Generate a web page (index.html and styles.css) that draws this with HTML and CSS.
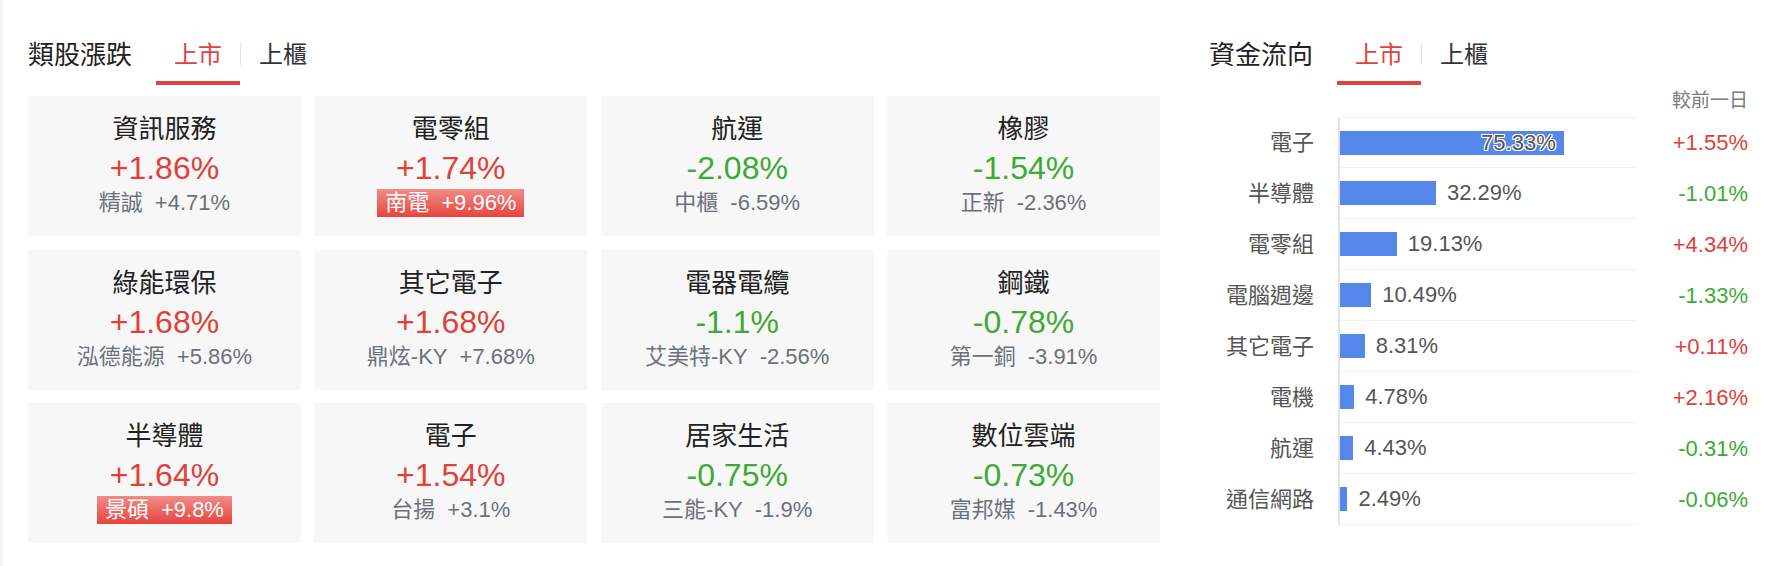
FILE: index.html
```html
<!DOCTYPE html>
<html lang="zh-Hant">
  <head>
    <meta charset="UTF-8" />
    <meta name="viewport" content="width=device-width, initial-scale=1.0" />
    <title>類股漲跌</title>
    <link rel="stylesheet" href="styles.css">
  </head>
  <body>
    <div class="page">
      <section class="sectors">
        <div class="section-head">
          <h2 class="section-title">類股漲跌</h2>
          <div class="tabs">
            <span class="tab active">上市</span>
            <span class="tab-sep"></span>
            <span class="tab">上櫃</span>
          </div>
        </div>
        <div class="sector-grid">
          <div class="sector-card">
            <div class="sector-name">資訊服務</div>
            <div class="sector-change up">+1.86%</div>
            <div class="sector-top"><span>精誠</span><span class="pct">+4.71%</span></div>
          </div>
          <div class="sector-card">
            <div class="sector-name">電零組</div>
            <div class="sector-change up">+1.74%</div>
            <div class="sector-top limit"><span>南電</span><span class="pct">+9.96%</span></div>
          </div>
          <div class="sector-card">
            <div class="sector-name">航運</div>
            <div class="sector-change down">-2.08%</div>
            <div class="sector-top"><span>中櫃</span><span class="pct">-6.59%</span></div>
          </div>
          <div class="sector-card">
            <div class="sector-name">橡膠</div>
            <div class="sector-change down">-1.54%</div>
            <div class="sector-top"><span>正新</span><span class="pct">-2.36%</span></div>
          </div>

          <div class="sector-card">
            <div class="sector-name">綠能環保</div>
            <div class="sector-change up">+1.68%</div>
            <div class="sector-top"><span>泓德能源</span><span class="pct">+5.86%</span></div>
          </div>
          <div class="sector-card">
            <div class="sector-name">其它電子</div>
            <div class="sector-change up">+1.68%</div>
            <div class="sector-top"><span>鼎炫-KY</span><span class="pct">+7.68%</span></div>
          </div>
          <div class="sector-card">
            <div class="sector-name">電器電纜</div>
            <div class="sector-change down">-1.1%</div>
            <div class="sector-top"><span>艾美特-KY</span><span class="pct">-2.56%</span></div>
          </div>
          <div class="sector-card">
            <div class="sector-name">鋼鐵</div>
            <div class="sector-change down">-0.78%</div>
            <div class="sector-top"><span>第一銅</span><span class="pct">-3.91%</span></div>
          </div>

          <div class="sector-card">
            <div class="sector-name">半導體</div>
            <div class="sector-change up">+1.64%</div>
            <div class="sector-top limit"><span>景碩</span><span class="pct">+9.8%</span></div>
          </div>
          <div class="sector-card">
            <div class="sector-name">電子</div>
            <div class="sector-change up">+1.54%</div>
            <div class="sector-top"><span>台揚</span><span class="pct">+3.1%</span></div>
          </div>
          <div class="sector-card">
            <div class="sector-name">居家生活</div>
            <div class="sector-change down">-0.75%</div>
            <div class="sector-top"><span>三能-KY</span><span class="pct">-1.9%</span></div>
          </div>
          <div class="sector-card">
            <div class="sector-name">數位雲端</div>
            <div class="sector-change down">-0.73%</div>
            <div class="sector-top"><span>富邦媒</span><span class="pct">-1.43%</span></div>
          </div>
        </div>
      </section>

      <section class="flow">
        <div class="section-head">
          <h2 class="section-title">資金流向</h2>
          <div class="tabs">
            <span class="tab active">上市</span>
            <span class="tab-sep"></span>
            <span class="tab">上櫃</span>
          </div>
        </div>
        <div class="flow-note">較前一日</div>
        <div class="flow-chart">
          <div class="flow-row">
            <div class="flow-name">電子</div>
            <div class="flow-track">
              <div class="flow-bar" style="width: 75.33%"><span class="flow-val inside">75.33%</span></div>
            </div>
            <div class="flow-diff up">+1.55%</div>
          </div>
          <div class="flow-row">
            <div class="flow-name">半導體</div>
            <div class="flow-track">
              <div class="flow-bar" style="width: 32.29%"></div>
              <span class="flow-val">32.29%</span>
            </div>
            <div class="flow-diff down">-1.01%</div>
          </div>
          <div class="flow-row">
            <div class="flow-name">電零組</div>
            <div class="flow-track">
              <div class="flow-bar" style="width: 19.13%"></div>
              <span class="flow-val">19.13%</span>
            </div>
            <div class="flow-diff up">+4.34%</div>
          </div>
          <div class="flow-row">
            <div class="flow-name">電腦週邊</div>
            <div class="flow-track">
              <div class="flow-bar" style="width: 10.49%"></div>
              <span class="flow-val">10.49%</span>
            </div>
            <div class="flow-diff down">-1.33%</div>
          </div>
          <div class="flow-row">
            <div class="flow-name">其它電子</div>
            <div class="flow-track">
              <div class="flow-bar" style="width: 8.31%"></div>
              <span class="flow-val">8.31%</span>
            </div>
            <div class="flow-diff up">+0.11%</div>
          </div>
          <div class="flow-row">
            <div class="flow-name">電機</div>
            <div class="flow-track">
              <div class="flow-bar" style="width: 4.78%"></div>
              <span class="flow-val">4.78%</span>
            </div>
            <div class="flow-diff up">+2.16%</div>
          </div>
          <div class="flow-row">
            <div class="flow-name">航運</div>
            <div class="flow-track">
              <div class="flow-bar" style="width: 4.43%"></div>
              <span class="flow-val">4.43%</span>
            </div>
            <div class="flow-diff down">-0.31%</div>
          </div>
          <div class="flow-row">
            <div class="flow-name">通信網路</div>
            <div class="flow-track">
              <div class="flow-bar" style="width: 2.49%"></div>
              <span class="flow-val">2.49%</span>
            </div>
            <div class="flow-diff down">-0.06%</div>
          </div>
        </div>
      </section>
    </div>
  </body>
</html>
```

FILE: styles.css
```css
body {
  font-family: "Liberation Sans", "Noto Sans CJK TC", sans-serif;
  background-color: #fff;
  color: #222;
  margin: 0;
  padding: 0;
  min-height: 100vh;
  box-sizing: border-box;
  border-left: 3px solid #f3f3f3;
}

.page {
  display: flex;
  gap: 49px;
  padding: 0 20px 0 25px;
}

.sectors {
  width: 1132px;
  flex: none;
}

.flow {
  width: 539px;
  flex: none;
}

/* Heading with the market tabs */
.section-head {
  display: flex;
  align-items: flex-end;
  height: 85px;
}

.section-title {
  margin: 0 0 13px;
  font-size: 26px;
  line-height: 34px;
  font-weight: normal;
  color: #222;
}

.tabs {
  display: flex;
  align-items: flex-end;
  margin-left: 24px;
}

.tab {
  font-size: 24px;
  line-height: 34px;
  padding: 0 18px 9px;
  color: #333;
  border-bottom: 4px solid transparent;
}

.tab.active {
  color: #e0433d;
  border-bottom-color: #e0433d;
}

.tab-sep {
  width: 1px;
  height: 22px;
  margin-bottom: 20px;
  background-color: #e2e2e2;
}

.up {
  color: #e0403a;
}

.down {
  color: #3eaa33;
}

/* Sector cards */
.sector-grid {
  display: grid;
  grid-template-columns: repeat(4, 1fr);
  grid-auto-rows: 140px;
  gap: 13.5px;
  margin-top: 11px;
}

.sector-card {
  background-color: #f7f7f7;
  display: flex;
  flex-direction: column;
  align-items: center;
  padding-top: 16px;
  box-sizing: border-box;
}

.sector-name {
  font-size: 26px;
  line-height: 34px;
  color: #222;
}

.sector-change {
  font-size: 32px;
  line-height: 40px;
  margin-top: 2px;
}

.sector-top {
  font-size: 22px;
  line-height: 30px;
  color: #6b717a;
}

.sector-top .pct {
  margin-left: 12px;
}

.sector-top.limit {
  line-height: 28px;
  margin-top: 1px;
  padding: 0 8px;
  color: #fff;
  background: linear-gradient(#f08c88, #e8443e);
}

/* Money flow chart */
.flow-note {
  height: 32px;
  line-height: 32px;
  text-align: right;
  font-size: 19px;
  color: #7a7a7a;
}

.flow-row {
  display: grid;
  grid-template-columns: 129px 299px 111px;
  height: 51px;
}

.flow-name {
  padding-right: 24px;
  text-align: right;
  font-size: 22px;
  line-height: 51px;
  color: #555;
}

.flow-track {
  display: flex;
  align-items: center;
  border-left: 2px solid #e3e3e3;
  border-bottom: 1px solid #f0f0f0;
  box-sizing: border-box;
}

.flow-row:first-child .flow-track {
  border-top: 1px solid #f0f0f0;
}

.flow-bar {
  height: 24px;
  flex: none;
  display: flex;
  align-items: center;
  justify-content: flex-end;
  background-color: #5688eb;
}

.flow-val {
  margin-left: 11px;
  font-size: 22px;
  color: #555;
}

.flow-val.inside {
  margin-left: 0;
  padding-right: 8px;
  text-shadow: 1px 0 #fff, -1px 0 #fff, 0 1px #fff, 0 -1px #fff,
    1px 1px #fff, -1px -1px #fff, 1px -1px #fff, -1px 1px #fff;
}

.flow-diff {
  text-align: right;
  font-size: 22px;
  line-height: 51px;
}
```
